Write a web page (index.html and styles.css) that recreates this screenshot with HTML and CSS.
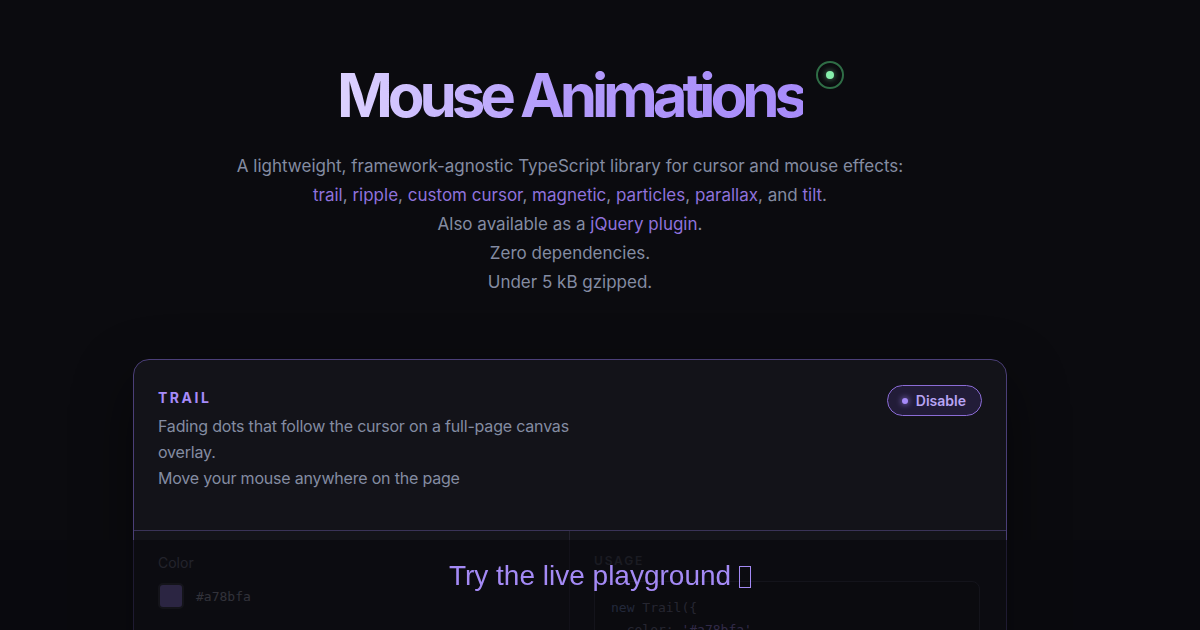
FILE: index.html
```html
<!DOCTYPE html>
<html lang="en">
<head>
  <meta charset="UTF-8" />
  <title>Mouse Animations</title>
  <link rel="stylesheet" href="styles.css">
</head>
<body>

<div class="page">
  <header class="hero">
    <h1 class="title">Mouse Animations<span class="pulse"><span class="pulse-dot"></span></span></h1>
    <p class="lead">
      A lightweight, framework-agnostic TypeScript library for cursor and mouse effects:<br>
      <a href="#">trail</a>, <a href="#">ripple</a>, <a href="#">custom cursor</a>, <a href="#">magnetic</a>, <a href="#">particles</a>, <a href="#">parallax</a>, and <a href="#">tilt</a>.<br>
      Also available as a <a href="#">jQuery plugin</a>.<br>
      Zero dependencies.<br>
      Under 5 kB gzipped.
    </p>
  </header>

  <section class="card">
    <div class="card-head">
      <div class="card-info">
        <h2 class="card-title">TRAIL</h2>
        <p class="card-desc">Fading dots that follow the cursor on a full-page canvas overlay.</p>
        <p class="card-desc">Move your mouse anywhere on the page</p>
      </div>
      <button class="toggle"><span class="toggle-dot"></span>Disable</button>
    </div>

    <div class="card-body">
      <div class="controls">
        <label class="field-label">Color</label>
        <div class="color-row">
          <span class="swatch"></span>
          <code class="color-value">#a78bfa</code>
        </div>
      </div>
      <div class="usage">
        <div class="usage-label">USAGE</div>
        <pre class="code"><span class="kw">new</span> Trail({
  color: <span class="str">'#a78bfa'</span>,
})</pre>
      </div>
    </div>
  </section>
</div>

<a href="#" class="cta">Try the live playground <span class="tofu"></span></a>

</body>
</html>
```

FILE: styles.css
```css
body {
  margin: 0;
  background: #0b0b0f;
  font-family: Inter, "Noto Sans", sans-serif;
  color: #8b93a7;
  overflow: hidden;
}

.page {
  width: 1140px;
  padding-top: 62px;
  display: flex;
  flex-direction: column;
  align-items: center;
}

.hero {
  text-align: center;
}

.title {
  position: relative;
  display: inline-block;
  margin: 0;
  font-size: 60px;
  line-height: 66px;
  font-weight: 700;
  letter-spacing: -0.085em;
  background: linear-gradient(90deg, #ddd3ff 0%, #b49cfb 45%, #a78bfa 100%);
  -webkit-background-clip: text;
  background-clip: text;
  color: transparent;
}

.pulse {
  position: absolute;
  top: -1px;
  right: -41px;
  width: 24px;
  height: 24px;
  border: 2px solid #2f6d46;
  border-radius: 50%;
  display: flex;
  align-items: center;
  justify-content: center;
}

.pulse-dot {
  width: 8px;
  height: 8px;
  border-radius: 50%;
  background: #86efac;
  box-shadow: 0 0 6px rgba(134, 239, 172, 0.6);
}

.lead {
  margin: 24px 0 0;
  font-size: 17px;
  line-height: 29px;
  color: #848ca2;
}

.lead a {
  color: #8f72dc;
  text-decoration: none;
}

.card {
  width: 874px;
  margin-top: 62px;
  background: #131319;
  border: 1px solid #4b3f78;
  border-radius: 16px;
  box-shadow: 0 20px 60px rgba(0, 0, 0, 0.45);
  box-sizing: border-box;
}

.card-head {
  display: flex;
  justify-content: space-between;
  align-items: flex-start;
  padding: 28px 24px 39px;
  border-bottom: 1px solid #3a3358;
}

.card-title {
  margin: 0;
  font-size: 14px;
  line-height: 20px;
  font-weight: 700;
  letter-spacing: 0.18em;
  color: #a78bfa;
}

.card-info {
  max-width: 420px;
}

.card-desc {
  margin: 0;
  font-size: 16px;
  line-height: 26px;
  letter-spacing: -0.012em;
  color: #848ca2;
}

.card-title + .card-desc {
  margin-top: 5px;
}

.toggle {
  margin-top: -3px;
  height: 31px;
  padding: 0 15px 0 14px;
  display: flex;
  align-items: center;
  gap: 8px;
  background: #221c38;
  border: 1px solid #8b6cd6;
  border-radius: 16px;
  color: #b8a4f4;
  font-family: Inter, sans-serif;
  font-size: 14px;
  font-weight: 600;
}

.toggle-dot {
  width: 6px;
  height: 6px;
  border-radius: 50%;
  background: #a78bfa;
  box-shadow: 0 0 6px #a78bfa;
}

.card-body {
  display: grid;
  grid-template-columns: 1fr 1fr;
  min-height: 160px;
}

.controls {
  padding: 22px 24px;
  border-right: 1px solid #24222f;
}

.field-label {
  display: block;
  font-size: 14px;
  line-height: 20px;
  color: #555766;
}

.color-row {
  display: flex;
  align-items: center;
  gap: 12px;
  margin-top: 10px;
}

.swatch {
  width: 22px;
  height: 22px;
  border-radius: 5px;
  background: #6c5ba8;
  border: 2px solid #2a2a34;
}

.color-value {
  font-family: "DejaVu Sans Mono", monospace;
  font-size: 13px;
  color: #80818f;
}

.usage {
  padding: 22px 26px 24px 24px;
}

.usage-label {
  font-size: 12px;
  line-height: 16px;
  font-weight: 600;
  letter-spacing: 0.15em;
  color: #3f404d;
}

.code {
  margin: 12px 0 0;
  padding: 15px 16px;
  background: #0f0f14;
  border: 1px solid #2a2a36;
  border-radius: 8px;
  font-family: "DejaVu Sans Mono", monospace;
  font-size: 13px;
  line-height: 22px;
  color: #5e5e74;
}

.code .kw {
  color: #53648f;
}

.code .str {
  color: #7e6ab4;
}

.cta {
  position: fixed;
  left: 0;
  right: 0;
  bottom: 0;
  height: 90px;
  box-sizing: border-box;
  padding-top: 19px;
  display: flex;
  justify-content: center;
  align-items: flex-start;
  gap: 8px;
  background: rgba(9, 9, 13, 0.66);
  color: #a48af5;
  font-family: "Liberation Sans", Arial, sans-serif;
  font-size: 28px;
  line-height: 34px;
  text-decoration: none;
}

.tofu {
  display: inline-block;
  width: 10px;
  height: 20px;
  margin-top: 7px;
  border: 1.5px solid currentColor;
}
```
